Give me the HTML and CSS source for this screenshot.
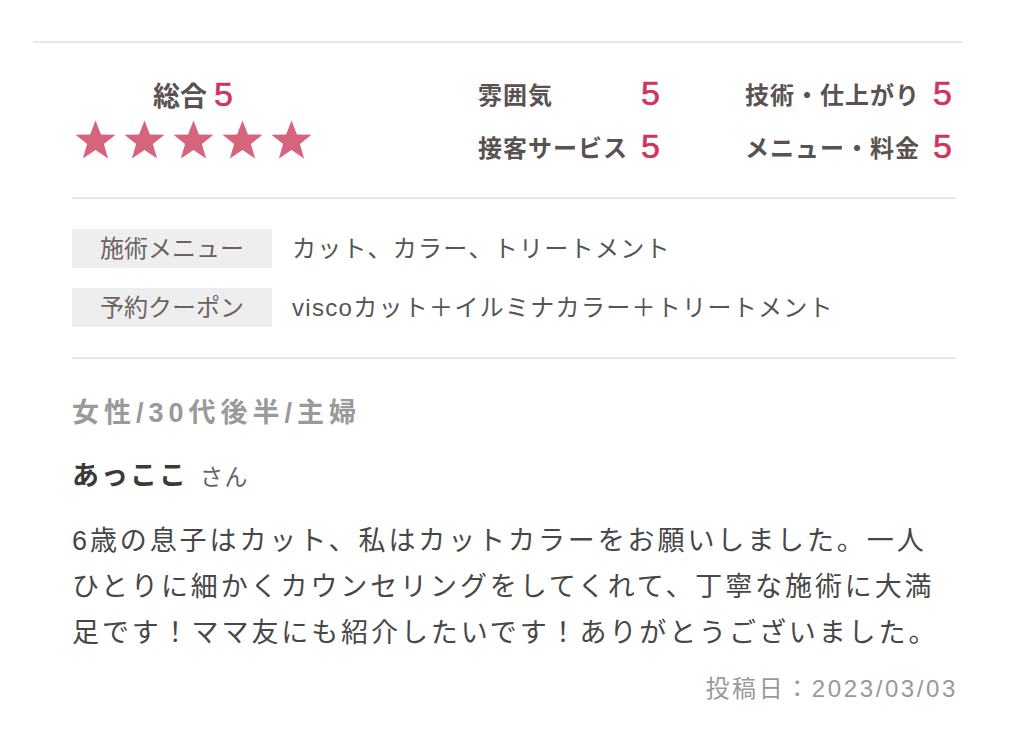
FILE: index.html
```html
<!DOCTYPE html>
<html lang="ja">
<head>
<meta charset="utf-8">
<title>口コミ</title>
<link rel="stylesheet" href="styles.css">
</head>
<body>
<div class="page">
  <div class="top-rule"></div>
  <article class="review">
    <section class="ratings">
      <div class="overall">
        <div class="overall-title">総合<span class="score-big">5</span></div>
        <div class="stars">
          <svg class="star" viewBox="0 0 40 38"><polygon points="20,0.5 25.3,14 39.5,14.4 28.2,23.4 32.3,37.5 20,29.2 7.7,37.5 11.8,23.4 0.5,14.4 14.7,14"/></svg>
          <svg class="star" viewBox="0 0 40 38"><polygon points="20,0.5 25.3,14 39.5,14.4 28.2,23.4 32.3,37.5 20,29.2 7.7,37.5 11.8,23.4 0.5,14.4 14.7,14"/></svg>
          <svg class="star" viewBox="0 0 40 38"><polygon points="20,0.5 25.3,14 39.5,14.4 28.2,23.4 32.3,37.5 20,29.2 7.7,37.5 11.8,23.4 0.5,14.4 14.7,14"/></svg>
          <svg class="star" viewBox="0 0 40 38"><polygon points="20,0.5 25.3,14 39.5,14.4 28.2,23.4 32.3,37.5 20,29.2 7.7,37.5 11.8,23.4 0.5,14.4 14.7,14"/></svg>
          <svg class="star" viewBox="0 0 40 38"><polygon points="20,0.5 25.3,14 39.5,14.4 28.2,23.4 32.3,37.5 20,29.2 7.7,37.5 11.8,23.4 0.5,14.4 14.7,14"/></svg>
        </div>
      </div>
      <div class="sub-ratings">
        <div class="sub col1"><span class="sub-label">雰囲気</span><span class="score">5</span></div>
        <div class="sub col2"><span class="sub-label">技術・仕上がり</span><span class="score">5</span></div>
        <div class="sub col1"><span class="sub-label">接客サービス</span><span class="score">5</span></div>
        <div class="sub col2"><span class="sub-label">メニュー・料金</span><span class="score">5</span></div>
      </div>
    </section>
    <section class="tags">
      <div class="tag-row"><span class="tag-label">施術メニュー</span><span class="tag-value">カット、カラー、トリートメント</span></div>
      <div class="tag-row"><span class="tag-label">予約クーポン</span><span class="tag-value">viscoカット＋イルミナカラー＋トリートメント</span></div>
    </section>
    <section class="body">
      <p class="profile">女性/30代後半/主婦</p>
      <p class="name">あっここ<span class="honorific">さん</span></p>
      <p class="comment">6歳の息子はカット、私はカットカラーをお願いしました。一人<br>ひとりに細かくカウンセリングをしてくれて、丁寧な施術に大満<br>足です！ママ友にも紹介したいです！ありがとうございました。</p>
      <p class="date">投稿日：2023/03/03</p>
    </section>
  </article>
</div>
</body>
</html>
```

FILE: styles.css
```css
html, body {
  margin: 0;
  padding: 0;
  background: #ffffff;
}
body {
  font-family: "Liberation Sans", "Noto Sans CJK JP", sans-serif;
  color: #4a4a4a;
}
p { margin: 0; }

.page {
  width: 929px;
  padding-left: 33px;
}
.top-rule {
  margin-top: 41px;
  height: 2px;
  background: #e6e6ec;
}
.review {
  margin: 0 6px 0 39px;
}

/* ratings */
.ratings {
  display: flex;
  align-items: flex-start;
  padding: 32px 0 33px;
  border-bottom: 2px solid #e8e8e8;
}
.overall {
  width: 238px;
  margin-top: 1px;
  margin-left: 2px;
  display: flex;
  flex-direction: column;
  align-items: center;
}
.overall-title {
  height: 36px;
  display: flex;
  align-items: center;
  font-size: 27px;
  font-weight: 700;
  color: #5a5252;
}
.score-big {
  font-size: 34px;
  font-weight: 400;
  color: #d1335d;
  margin-left: 7px;
  -webkit-text-stroke: 0.6px #d1335d;
}
.stars {
  display: flex;
  gap: 8px;
  margin-top: 8px;
}
.star {
  width: 41px;
  height: 39px;
  fill: #d5647f;
  display: block;
}
.sub-ratings {
  margin-left: 166px;
  display: grid;
  grid-template-columns: 267px auto;
  row-gap: 17px;
}
.sub {
  display: flex;
  align-items: center;
  height: 36px;
}
.sub-label {
  font-size: 24px;
  font-weight: 700;
  color: #5a5252;
  letter-spacing: 1px;
}
.col1 .sub-label { width: 163px; }
.col2 .sub-label { width: 188px; }
.score {
  font-size: 34px;
  color: #d1335d;
  line-height: 36px;
  -webkit-text-stroke: 0.6px #d1335d;
}

/* tags */
.tags {
  display: flex;
  flex-direction: column;
  gap: 20px;
  padding: 30px 0;
  border-bottom: 2px solid #e8e8e8;
}
.tag-row {
  display: flex;
  align-items: center;
}
.tag-label {
  width: 200px;
  height: 39px;
  line-height: 39px;
  text-align: center;
  background: #eeeeee;
  font-size: 24px;
  color: #6b6363;
}
.tag-value {
  margin-left: 20px;
  font-size: 24px;
  line-height: 39px;
  letter-spacing: 1.3px;
  color: #555555;
}

/* body */
.profile {
  margin-top: 36px;
  font-size: 27px;
  font-weight: 700;
  line-height: 36px;
  color: #9a9a9a;
  letter-spacing: 5px;
}
.name {
  margin-top: 27px;
  font-size: 27px;
  font-weight: 700;
  line-height: 36px;
  color: #3a3a3a;
  letter-spacing: 2px;
}
.honorific {
  font-size: 23px;
  font-weight: 400;
  color: #666666;
  margin-left: 12px;
  letter-spacing: 1.5px;
}
.comment {
  margin-top: 23px;
  font-size: 27px;
  line-height: 46px;
  letter-spacing: 2.9px;
  color: #474747;
}
.date {
  margin-top: 17px;
  margin-right: -2px;
  text-align: right;
  font-size: 24px;
  line-height: 32px;
  color: #999999;
  letter-spacing: 2.6px;
}
```
